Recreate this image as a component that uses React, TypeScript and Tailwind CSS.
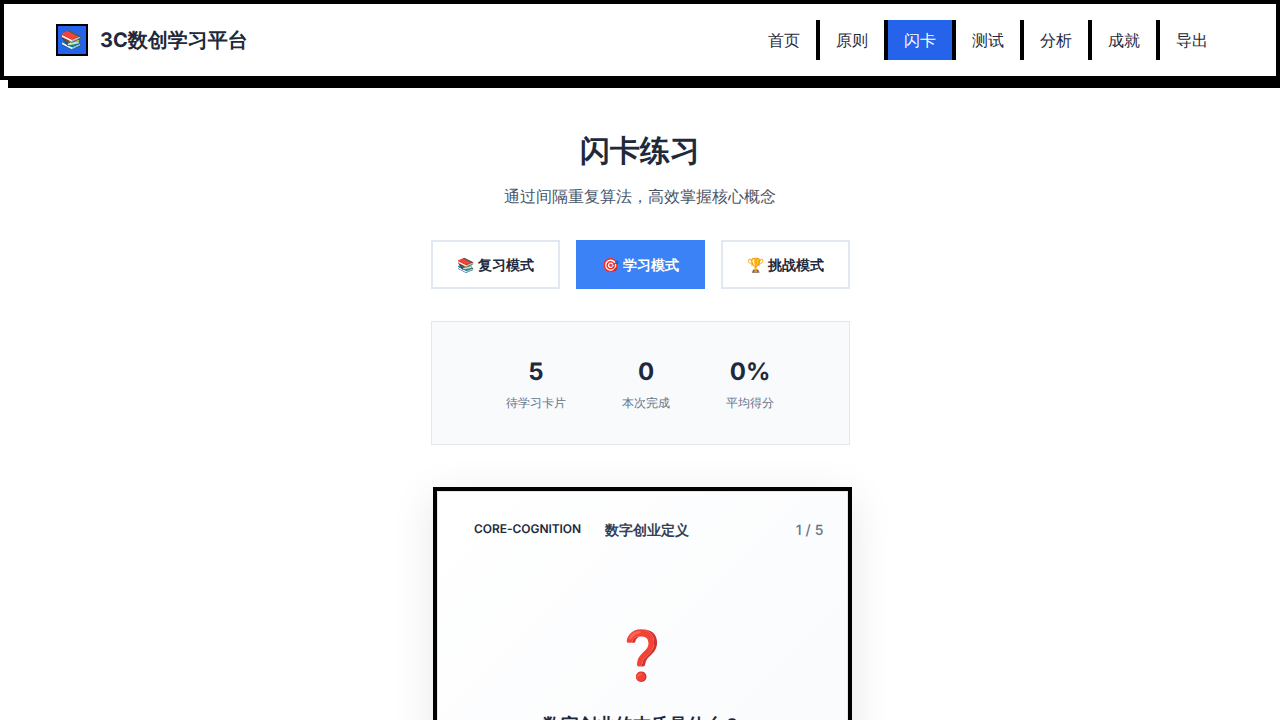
const navItems = ["首页", "原则", "闪卡", "测试", "分析", "成就", "导出"];

const modes = [
  { icon: "📚", label: "复习模式" },
  { icon: "🎯", label: "学习模式", active: true },
  { icon: "🏆", label: "挑战模式" },
];

const stats = [
  { value: "5", label: "待学习卡片" },
  { value: "0", label: "本次完成" },
  { value: "0%", label: "平均得分" },
];

function Header() {
  return (
    <header className="flex h-20 shrink-0 items-center justify-between border-4 border-black bg-white px-[52px] shadow-[8px_8px_0_0_#000]">
      <div className="flex items-center gap-3">
        <div className="flex size-8 items-center justify-center border-2 border-black bg-[#2563eb] pt-0.5 text-lg leading-7">📚</div>
        <span className="text-xl font-bold text-[#1e293b]">3C数创学习平台</span>
      </div>
      <nav className="flex">
        {navItems.map((item, i) => (
          <a
            key={item}
            className={`flex h-10 items-center px-4 text-base ${
              item === "闪卡" ? "bg-[#2563eb] text-white" : "text-[#1e293b]"
            } ${i < navItems.length - 1 ? "border-r-4 border-black" : ""}`}
          >
            {item}
          </a>
        ))}
      </nav>
    </header>
  );
}

function Flashcard() {
  return (
    <section className="ml-0.5 mt-[42px] h-[408px] w-[419px] border-4 border-black shadow-[0_10px_40px_rgba(0,0,0,0.1)]">
      <div className="h-full border border-[#e2e8f0] bg-[linear-gradient(135deg,#ffffff_0%,#f8fafc_100%)] pt-6">
        <div className="flex items-start justify-between pl-9 pr-[23.5px] pt-1">
          <div className="flex items-start gap-6">
            <span className="text-xs leading-[18px] font-semibold tracking-[-0.05px] text-[#1e293b]">CORE-COGNITION</span>
            <span className="text-sm leading-[21px] font-semibold text-[#334155]">数字创业定义</span>
          </div>
          <span className="text-sm leading-[21px] font-medium text-[#64748b] [word-spacing:0.3px]">1 / 5</span>
        </div>
        <div className="mt-[71px] text-center text-[48px] leading-[86px]">❓</div>
        <h2 className="mt-3.5 pr-px text-center text-lg leading-7 font-semibold text-[#1e293b]">数字创业的本质是什么？</h2>
      </div>
    </section>
  );
}

export default function App() {
  return (
    <div className="flex h-screen flex-col overflow-hidden bg-white font-['Inter',sans-serif] antialiased [text-rendering:geometricPrecision]">
      <Header />
      <main className="flex flex-col items-center pt-[50px]">
        <h1 className="text-3xl leading-[42px] font-semibold text-[#1e293b]">闪卡练习</h1>
        <p className="mt-3 text-base leading-6 text-[#475569]">通过间隔重复算法，高效掌握核心概念</p>
        <div className="ml-px mt-8 flex w-[419px] flex-col">
          <div className="flex gap-4">
            {modes.map((m) => (
              <button
                key={m.label}
                className={`h-[49px] w-[129px] border-2 text-sm font-semibold whitespace-nowrap ${
                  m.active ? "border-[#3b82f6] bg-[#3b82f6] text-white" : "border-[#e2e8f0] bg-white text-[#1e293b]"
                }`}
              >
                {m.icon} {m.label}
              </button>
            ))}
          </div>
          <div className="mt-8 flex h-[124px] justify-center gap-14 border border-[#e2e8f0] bg-[#f8fafc] pt-8 pr-px">
            {stats.map((s) => (
              <div key={s.label} className="flex flex-col items-center">
                <span className="text-2xl leading-9 font-bold text-[#1e293b]">{s.value}</span>
                <span className="mt-1 text-xs leading-[18px] text-[#64748b]">{s.label}</span>
              </div>
            ))}
          </div>
          <Flashcard />
        </div>
      </main>
    </div>
  );
}
